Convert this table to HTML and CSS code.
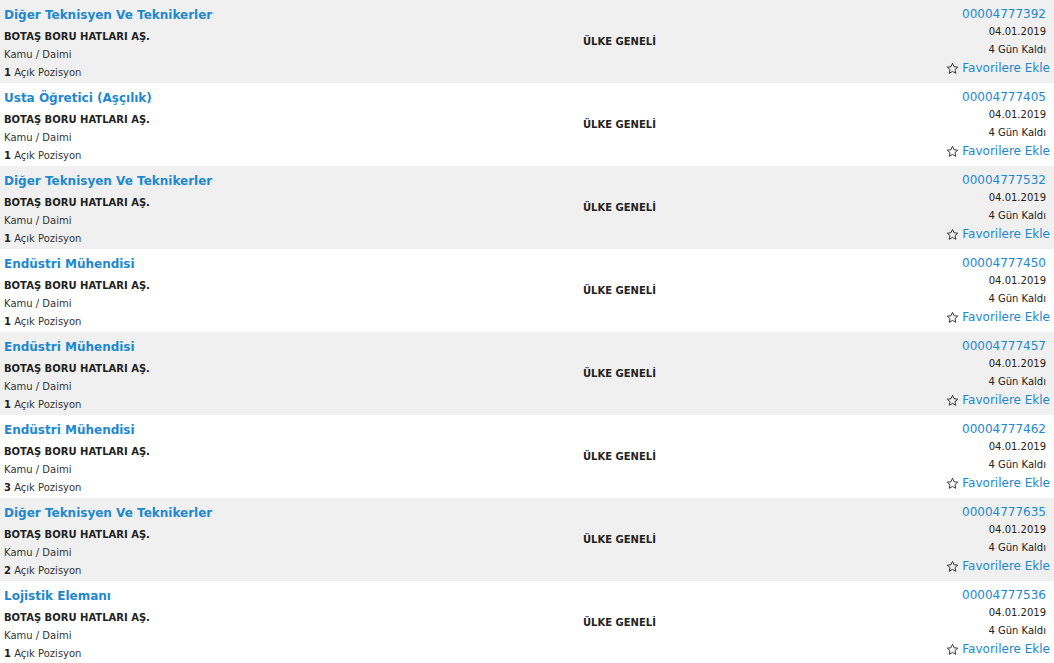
FILE: index.html
```html
<!DOCTYPE html>
<html lang="tr">
<head>
<meta charset="utf-8">
<title>İlanlar</title>
<link rel="stylesheet" href="styles.css">
</head>
<body>
<div class="list">
  <div class="row alt">
    <div class="info">
      <a class="title">Diğer Teknisyen Ve Teknikerler</a>
      <div class="company">BOTAŞ BORU HATLARI AŞ.</div>
      <div class="meta">Kamu / Daimi</div>
      <div class="meta"><b>1</b> Açık Pozisyon</div>
    </div>
    <div class="place">ÜLKE GENELİ</div>
    <div class="side">
      <a class="code">00004777392</a>
      <div class="small">04.01.2019</div>
      <div class="small">4 Gün Kaldı</div>
      <a class="fav"><svg class="star" viewBox="0 0 24 24"><path d="M12 2.5l2.9 6.3 6.8.7-5.1 4.6 1.5 6.8L12 17.4l-6.1 3.5 1.5-6.8-5.1-4.6 6.8-.7z"/></svg>Favorilere Ekle</a>
    </div>
  </div>
  <div class="row">
    <div class="info">
      <a class="title">Usta Öğretici (Aşçılık)</a>
      <div class="company">BOTAŞ BORU HATLARI AŞ.</div>
      <div class="meta">Kamu / Daimi</div>
      <div class="meta"><b>1</b> Açık Pozisyon</div>
    </div>
    <div class="place">ÜLKE GENELİ</div>
    <div class="side">
      <a class="code">00004777405</a>
      <div class="small">04.01.2019</div>
      <div class="small">4 Gün Kaldı</div>
      <a class="fav"><svg class="star" viewBox="0 0 24 24"><path d="M12 2.5l2.9 6.3 6.8.7-5.1 4.6 1.5 6.8L12 17.4l-6.1 3.5 1.5-6.8-5.1-4.6 6.8-.7z"/></svg>Favorilere Ekle</a>
    </div>
  </div>
  <div class="row alt">
    <div class="info">
      <a class="title">Diğer Teknisyen Ve Teknikerler</a>
      <div class="company">BOTAŞ BORU HATLARI AŞ.</div>
      <div class="meta">Kamu / Daimi</div>
      <div class="meta"><b>1</b> Açık Pozisyon</div>
    </div>
    <div class="place">ÜLKE GENELİ</div>
    <div class="side">
      <a class="code">00004777532</a>
      <div class="small">04.01.2019</div>
      <div class="small">4 Gün Kaldı</div>
      <a class="fav"><svg class="star" viewBox="0 0 24 24"><path d="M12 2.5l2.9 6.3 6.8.7-5.1 4.6 1.5 6.8L12 17.4l-6.1 3.5 1.5-6.8-5.1-4.6 6.8-.7z"/></svg>Favorilere Ekle</a>
    </div>
  </div>
  <div class="row">
    <div class="info">
      <a class="title">Endüstri Mühendisi</a>
      <div class="company">BOTAŞ BORU HATLARI AŞ.</div>
      <div class="meta">Kamu / Daimi</div>
      <div class="meta"><b>1</b> Açık Pozisyon</div>
    </div>
    <div class="place">ÜLKE GENELİ</div>
    <div class="side">
      <a class="code">00004777450</a>
      <div class="small">04.01.2019</div>
      <div class="small">4 Gün Kaldı</div>
      <a class="fav"><svg class="star" viewBox="0 0 24 24"><path d="M12 2.5l2.9 6.3 6.8.7-5.1 4.6 1.5 6.8L12 17.4l-6.1 3.5 1.5-6.8-5.1-4.6 6.8-.7z"/></svg>Favorilere Ekle</a>
    </div>
  </div>
  <div class="row alt">
    <div class="info">
      <a class="title">Endüstri Mühendisi</a>
      <div class="company">BOTAŞ BORU HATLARI AŞ.</div>
      <div class="meta">Kamu / Daimi</div>
      <div class="meta"><b>1</b> Açık Pozisyon</div>
    </div>
    <div class="place">ÜLKE GENELİ</div>
    <div class="side">
      <a class="code">00004777457</a>
      <div class="small">04.01.2019</div>
      <div class="small">4 Gün Kaldı</div>
      <a class="fav"><svg class="star" viewBox="0 0 24 24"><path d="M12 2.5l2.9 6.3 6.8.7-5.1 4.6 1.5 6.8L12 17.4l-6.1 3.5 1.5-6.8-5.1-4.6 6.8-.7z"/></svg>Favorilere Ekle</a>
    </div>
  </div>
  <div class="row">
    <div class="info">
      <a class="title">Endüstri Mühendisi</a>
      <div class="company">BOTAŞ BORU HATLARI AŞ.</div>
      <div class="meta">Kamu / Daimi</div>
      <div class="meta"><b>3</b> Açık Pozisyon</div>
    </div>
    <div class="place">ÜLKE GENELİ</div>
    <div class="side">
      <a class="code">00004777462</a>
      <div class="small">04.01.2019</div>
      <div class="small">4 Gün Kaldı</div>
      <a class="fav"><svg class="star" viewBox="0 0 24 24"><path d="M12 2.5l2.9 6.3 6.8.7-5.1 4.6 1.5 6.8L12 17.4l-6.1 3.5 1.5-6.8-5.1-4.6 6.8-.7z"/></svg>Favorilere Ekle</a>
    </div>
  </div>
  <div class="row alt">
    <div class="info">
      <a class="title">Diğer Teknisyen Ve Teknikerler</a>
      <div class="company">BOTAŞ BORU HATLARI AŞ.</div>
      <div class="meta">Kamu / Daimi</div>
      <div class="meta"><b>2</b> Açık Pozisyon</div>
    </div>
    <div class="place">ÜLKE GENELİ</div>
    <div class="side">
      <a class="code">00004777635</a>
      <div class="small">04.01.2019</div>
      <div class="small">4 Gün Kaldı</div>
      <a class="fav"><svg class="star" viewBox="0 0 24 24"><path d="M12 2.5l2.9 6.3 6.8.7-5.1 4.6 1.5 6.8L12 17.4l-6.1 3.5 1.5-6.8-5.1-4.6 6.8-.7z"/></svg>Favorilere Ekle</a>
    </div>
  </div>
  <div class="row">
    <div class="info">
      <a class="title">Lojistik Elemanı</a>
      <div class="company">BOTAŞ BORU HATLARI AŞ.</div>
      <div class="meta">Kamu / Daimi</div>
      <div class="meta"><b>1</b> Açık Pozisyon</div>
    </div>
    <div class="place">ÜLKE GENELİ</div>
    <div class="side">
      <a class="code">00004777536</a>
      <div class="small">04.01.2019</div>
      <div class="small">4 Gün Kaldı</div>
      <a class="fav"><svg class="star" viewBox="0 0 24 24"><path d="M12 2.5l2.9 6.3 6.8.7-5.1 4.6 1.5 6.8L12 17.4l-6.1 3.5 1.5-6.8-5.1-4.6 6.8-.7z"/></svg>Favorilere Ekle</a>
    </div>
  </div>
</div>
</body>
</html>
```

FILE: styles.css
```css
html, body {
  margin: 0;
  padding: 0;
  background: #ffffff;
}

body {
  font-family: "DejaVu Sans", Verdana, sans-serif;
  color: #222222;
  overflow: hidden;
}

.list {
  display: flex;
  flex-direction: column;
}

.row {
  display: flex;
  height: 83px;
  background: #ffffff;
}

.row.alt {
  background: #f0f0f0;
}

.info {
  flex: 0 0 579px;
  padding: 3px 0 0 4px;
  box-sizing: border-box;
}

.title {
  display: block;
  font-size: 12px;
  font-weight: bold;
  line-height: 25px;
  color: #1d88cf;
}

.company {
  font-size: 10px;
  font-weight: bold;
  line-height: 18px;
  color: #222222;
}

.meta {
  font-size: 10px;
  line-height: 18px;
  color: #333333;
}

.meta b {
  font-weight: bold;
  color: #222222;
}

.place {
  flex: 1;
  display: flex;
  align-items: center;
  padding-left: 4px;
  font-size: 10px;
  font-weight: bold;
  color: #222222;
}

.side {
  flex: 0 0 auto;
  display: flex;
  flex-direction: column;
  align-items: flex-end;
  padding: 5px 4px 0 0;
}

.code {
  font-size: 12px;
  line-height: 18px;
  color: #1d88cf;
  padding-right: 4px;
}

.small {
  font-size: 10px;
  line-height: 18px;
  color: #222222;
  padding-right: 4px;
}

.fav {
  display: flex;
  align-items: center;
  gap: 3px;
  font-size: 12px;
  line-height: 18px;
  color: #1d88cf;
}

.star {
  width: 13px;
  height: 13px;
  fill: none;
  stroke: #333333;
  stroke-width: 1.8;
  stroke-linejoin: round;
}
```
